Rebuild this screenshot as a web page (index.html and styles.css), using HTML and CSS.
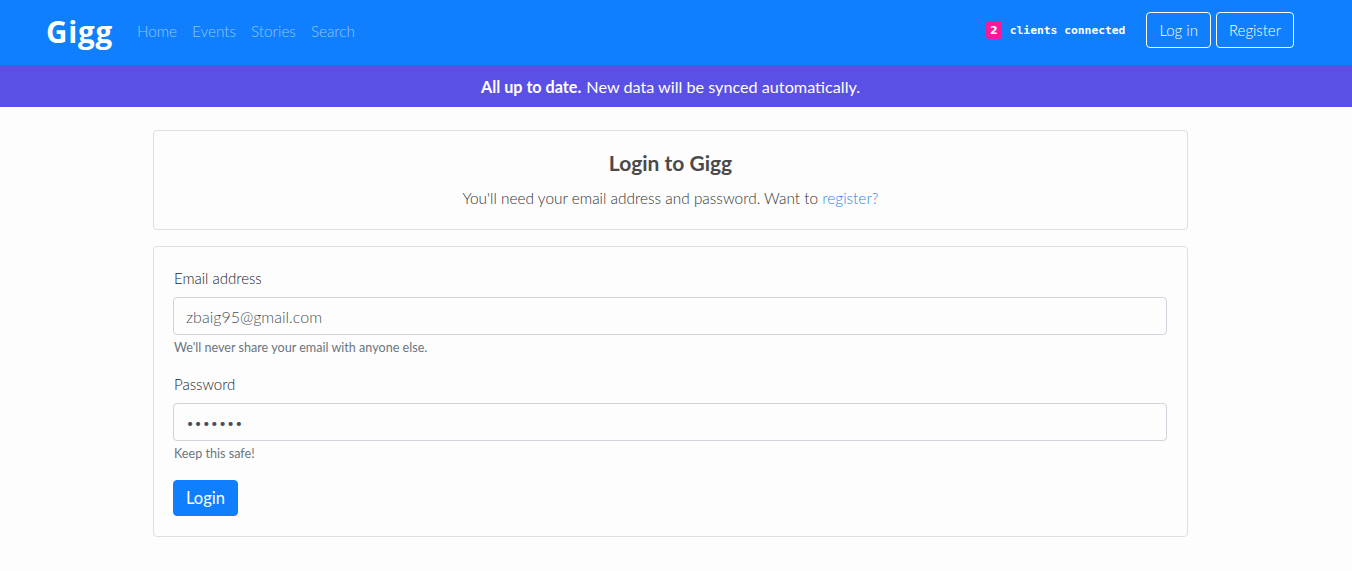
FILE: index.html
```html
<!DOCTYPE html>
<html lang="en">
<head>
<meta charset="utf-8">
<title>Gigg - Login</title>
<link rel="stylesheet" href="styles.css">
</head>
<body>
<nav class="navbar">
  <a class="brand" href="#">Gigg</a>
  <ul class="nav-links">
    <li><a href="#">Home</a></li>
    <li><a href="#">Events</a></li>
    <li><a href="#">Stories</a></li>
    <li><a href="#">Search</a></li>
  </ul>
  <div class="nav-right">
    <div class="clients"><span class="badge">2</span><code>clients connected</code></div>
    <a class="btn-outline" href="#">Log in</a>
    <a class="btn-outline" href="#">Register</a>
  </div>
</nav>
<div class="sync-banner"><strong>All up to date.</strong> New data will be synced automatically.</div>
<main class="container">
  <section class="card card-intro">
    <h1 class="title">Login to Gigg</h1>
    <p class="lead">You'll need your email address and password. Want to <a href="#">register?</a></p>
  </section>
  <section class="card card-form">
    <form>
      <div class="form-group">
        <label for="email">Email address</label>
        <input id="email" class="form-control" type="email" value="zbaig95@gmail.com">
        <small class="help">We'll never share your email with anyone else.</small>
      </div>
      <div class="form-group">
        <label for="password">Password</label>
        <input id="password" class="form-control" type="password" value="abcdefg">
        <small class="help">Keep this safe!</small>
      </div>
      <button type="button" class="btn-primary">Login</button>
    </form>
  </section>
</main>
</body>
</html>
```
FILE: styles.css
```css
* { box-sizing: border-box; }
html, body { margin: 0; padding: 0; }
body {
  background: #fdfdfd;
  font-family: Lato, "Open Sans", sans-serif;
  font-weight: 300;
  font-size: 16px;
  color: #212529;
}
a { text-decoration: none; }

.navbar {
  height: 65px;
  background: #0f7ffe;
  display: flex;
  align-items: center;
  padding: 0 58px 5px 46px;
}
.brand {
  color: #fff;
  font-family: "Open Sans", sans-serif;
  font-weight: 700;
  font-size: 29.5px;
  letter-spacing: 0.8px;
  margin-right: 24px;
  line-height: 1;
  padding-top: 3px;
}
.nav-links {
  list-style: none;
  display: flex;
  gap: 15px;
  margin: 0;
  padding: 0;
}
.nav-links a {
  color: rgba(255,255,255,0.55);
  font-size: 15.3px;
}
.nav-right {
  margin-left: auto;
  display: flex;
  align-items: center;
}
.clients {
  display: flex;
  align-items: center;
  margin-right: 16px;
}
.badge {
  display: inline-flex;
  align-items: center;
  justify-content: center;
  width: 16px;
  height: 18px;
  border-radius: 3px;
  background: #f7199a;
  color: #fff;
  font-family: "DejaVu Sans", sans-serif;
  font-weight: 700;
  font-size: 11px;
  margin-right: 8px;
}
.clients code {
  color: #fff;
  font-family: "DejaVu Sans Mono", monospace;
  font-weight: 700;
  font-size: 11.3px;
}
.btn-outline {
  display: inline-flex;
  align-items: center;
  height: 36px;
  padding: 0 12px;
  border: 1px solid #fff;
  border-radius: 4px;
  color: #fff;
  font-size: 15px;
  margin-left: 5px;
}

.sync-banner {
  height: 42px;
  background: #5b50e5;
  color: #fff;
  font-weight: 400;
  display: flex;
  align-items: center;
  justify-content: center;
  font-size: 16.2px;
  padding-right: 11px;
}
.sync-banner strong { font-weight: 700; margin-right: 5px; }

.container {
  padding: 23px 164px 0 153px;
  display: flex;
  flex-direction: column;
  gap: 16px;
}
.card {
  border: 1px solid #dfdfdf;
  border-radius: 4px;
  background: #fdfdfd;
  padding: 20px;
}
.card-intro { text-align: center; padding-bottom: 19px; }
.title {
  margin: 0 0 11px;
  font-size: 21px;
  line-height: 24px;
  font-weight: 700;
  color: #4a4a4a;
}
.lead {
  margin: 0;
  font-size: 15.4px;
  line-height: 24px;
  color: #333;
}
.lead a { color: #2e86f0; }

.form-group { margin-bottom: 16px; display: flex; flex-direction: column; }
label {
  font-size: 15px;
  line-height: 22px;
  margin-bottom: 8px;
  color: #212529;
}
.form-control {
  height: 38px;
  border: 1px solid #ced4da;
  border-radius: 4px;
  padding: 0 12px;
  font-family: Lato, "Open Sans", sans-serif;
  font-weight: 300;
  font-size: 16px;
  color: #495057;
  background: #fdfdfd;
  margin-left: -1px;
}
input[type=password] { font-size: 14px; }
.help {
  margin-top: 4px;
  font-size: 12.6px;
  line-height: 18px;
  color: #6c757d;
  font-weight: 400;
}
.btn-primary {
  height: 36px;
  padding: 0 12px;
  margin-top: 1px;
  margin-left: -1px;
  background: #0f7ffe;
  color: #fff;
  border: 1px solid #0f7ffe;
  border-radius: 4px;
  font-family: Lato, "Open Sans", sans-serif;
  font-size: 16.5px;
  font-weight: 400;
  cursor: pointer;
}
```
